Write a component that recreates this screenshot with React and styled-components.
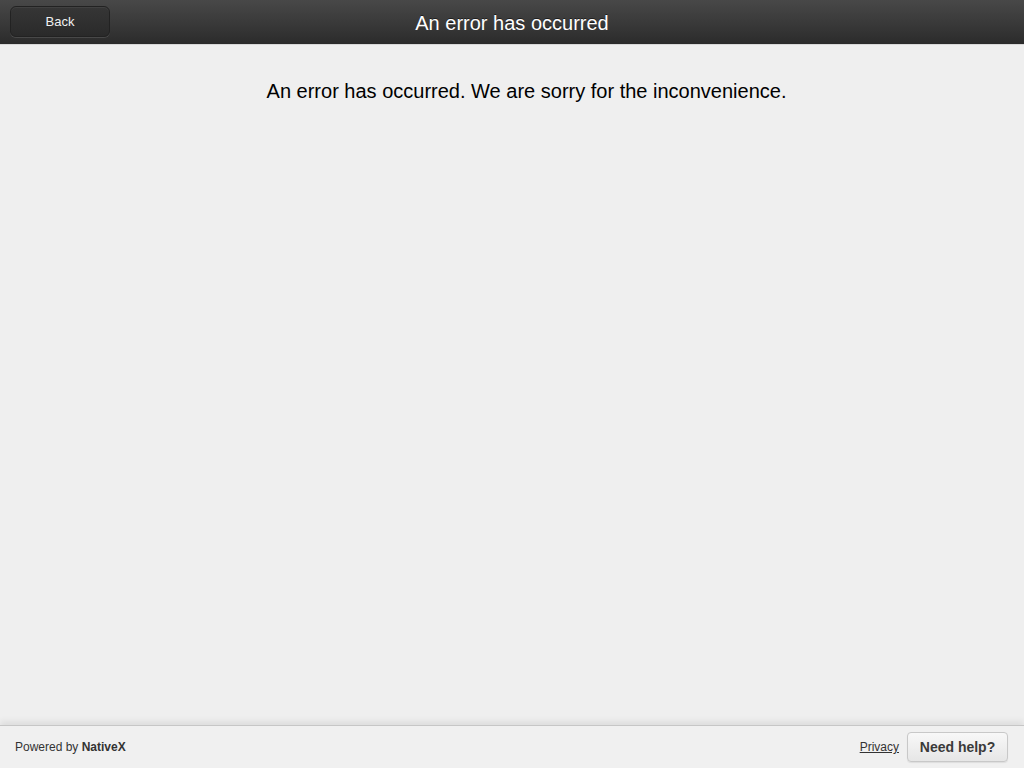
import React from "react";
import styled, { createGlobalStyle } from "styled-components";

const Global = createGlobalStyle`
  html, body { margin: 0; padding: 0; height: 100%; }
  body { background: #efefef; font-family: "Liberation Sans", Arial, sans-serif; }
  #root { height: 100%; }
`;

const Page = styled.div`
  display: flex;
  flex-direction: column;
  height: 768px;
  background: #efefef;
`;

const Header = styled.header`
  position: relative;
  display: flex;
  align-items: center;
  justify-content: center;
  height: 45px;
  flex-shrink: 0;
  background: linear-gradient(to bottom, #484848 0%, #3a3a3a 50%, #2b2b2b 100%);
  border-bottom: 1px solid #d8d8d8;
  box-sizing: border-box;
`;

const BackButton = styled.button`
  position: absolute;
  left: 10px;
  top: 6px;
  width: 100px;
  height: 31px;
  border-radius: 6px;
  border: 1px solid #222;
  background: linear-gradient(to bottom, #363636, #2a2a2a);
  box-shadow: 0 1px 0 rgba(255,255,255,0.12), inset 0 1px 0 rgba(255,255,255,0.06);
  color: #f0f0f0;
  font-family: "Liberation Sans", Arial, sans-serif;
  font-size: 13px;
  padding: 0;
  cursor: pointer;
`;

const Title = styled.h1`
  margin: 2px 0 0 0;
  color: #ffffff;
  font-size: 20px;
  font-weight: normal;
  text-shadow: 0 -1px 0 rgba(0,0,0,0.5);
`;

const Main = styled.main`
  flex: 1;
  display: flex;
  justify-content: center;
  padding-top: 34px;
  padding-left: 29px;
`;

const Message = styled.p`
  margin: 0;
  font-size: 20px;
  color: #000;
  line-height: 24px;
`;

const Footer = styled.footer`
  display: flex;
  align-items: center;
  justify-content: space-between;
  height: 43px;
  flex-shrink: 0;
  box-sizing: border-box;
  padding: 0 16px 0 15px;
  border-top: 1px solid #c6c6c6;
  box-shadow: 0 -4px 6px rgba(0,0,0,0.07);
  background: #f0f0f0;
`;

const Powered = styled.span`
  font-size: 12px;
  color: #333;
  b { color: #333; font-weight: bold; }
`;

const Right = styled.div`
  display: flex;
  align-items: center;
  gap: 8px;
`;

const PrivacyLink = styled.a`
  font-size: 12px;
  color: #333;
  text-decoration: underline;
`;

const HelpButton = styled.button`
  width: 101px;
  height: 30px;
  border-radius: 4px;
  border: 1px solid #c8c8c8;
  background: linear-gradient(to bottom, #f8f8f8, #e6e6e6);
  box-shadow: 0 1px 1px rgba(0,0,0,0.08);
  color: #3a3a3a;
  font-family: "Liberation Sans", Arial, sans-serif;
  font-size: 14px;
  font-weight: bold;
  padding: 0;
`;

export default function App() {
  return (
    <>
      <Global />
      <Page>
        <Header>
          <BackButton>Back</BackButton>
          <Title>An error has occurred</Title>
        </Header>
        <Main>
          <Message>An error has occurred. We are sorry for the inconvenience.</Message>
        </Main>
        <Footer>
          <Powered>Powered by <b>NativeX</b></Powered>
          <Right>
            <PrivacyLink>Privacy</PrivacyLink>
            <HelpButton>Need help?</HelpButton>
          </Right>
        </Footer>
      </Page>
    </>
  );
}
